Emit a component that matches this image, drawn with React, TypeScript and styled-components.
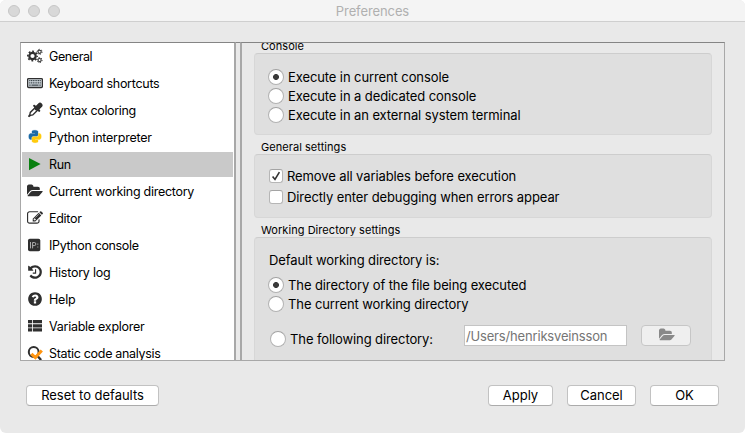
import React from 'react';
import styled, { createGlobalStyle, css } from 'styled-components';

const GlobalStyle = createGlobalStyle`
  * { box-sizing: border-box; }
  html, body { margin: 0; padding: 0; background: #fff; overflow: hidden; }
  body { font-family: Inter, "Liberation Sans", sans-serif; font-size: 13px; color: #000; }
`;

const Window = styled.div`
  width: 745px;
  height: 433px;
  display: flex;
  flex-direction: column;
  background: #e9e9e9;
  border-radius: 6px;
  overflow: hidden;
`;

const TitleBar = styled.header`
  height: 22px;
  flex: none;
  display: grid;
  grid-template-columns: 1fr auto 1fr;
  align-items: center;
  background: #f4f4f4;
  border-bottom: 1px solid #cfcfcf;
`;

const TrafficLights = styled.div`
  display: flex;
  gap: 8px;
  padding-left: 8px;
`;

const Light = styled.span`
  width: 12px;
  height: 12px;
  border-radius: 50%;
  background: #d8d8d8;
  border: 1px solid #c6c6c6;
`;

const Title = styled.span`
  color: #b0b0b0;
  line-height: 20px;
  letter-spacing: -0.1px;
`;

const Panes = styled.main`
  display: flex;
  height: 319px;
  margin: 20px 20px 0;
`;

const Splitter = styled.div`
  width: 4px;
  border-top: 1px solid #858585;
  border-bottom: 1px solid #a8a8a8;
`;

const CategoryList = styled.ul`
  width: 216px;
  margin: 0;
  padding: 1px 1px 0;
  list-style: none;
  display: flex;
  flex-direction: column;
  gap: 2px;
  background: #fff;
  border: 1px solid #a8a8a8;
  border-top-color: #858585;
  border-right: 2px solid #a8a8a8;
  overflow: hidden;
`;

const Category = styled.li<{ $active?: boolean; $spacing: number }>`
  flex: none;
  height: 25px;
  display: flex;
  align-items: center;
  gap: 6px;
  padding: 0 0 1px 5px;
  background: ${p => (p.$active ? '#c9c9c9' : 'transparent')};
  font-size: 12.5px;
  letter-spacing: ${p => p.$spacing}px;
  white-space: nowrap;
  svg { width: 16px; height: 16px; flex: none; display: block; color: #2f2f2f; }
`;

const Page = styled.section`
  flex: 1;
  min-width: 0;
  padding: 0 12px;
  border: 1px solid #a8a8a8;
  border-top-color: #858585;
  border-left: 2px solid #a8a8a8;
  overflow: hidden;
`;

const GroupTitle = styled.h2<{ $height: number }>`
  margin: 0;
  padding-left: 7px;
  height: ${p => p.$height}px;
  display: flex;
  align-items: flex-end;
  font-size: 11px;
  font-weight: 400;
  line-height: 14px;
  letter-spacing: 0.05px;
`;

const Group = styled.div<{ $height: number; $top: number }>`
  height: ${p => p.$height}px;
  padding: ${p => p.$top}px 0 0 13px;
  background: #dfdfdf;
  border: 1px solid #d7d7d7;
  border-top-color: #cdcdcd;
  border-radius: 4px;
`;

const Option = styled.label<{ $height: number; $boxed?: boolean; $drop?: number }>`
  height: ${p => p.$height}px;
  margin-top: ${p => p.$drop ?? 0}px;
  padding-left: ${p => (p.$boxed ? 1 : 0)}px;
  display: flex;
  align-items: center;
  gap: 4px;
  letter-spacing: -0.1px;
  white-space: nowrap;
  > span:last-child { margin-top: -1px; }
`;

const Radio = styled.span<{ $checked?: boolean }>`
  width: 16px;
  height: 16px;
  flex: none;
  border-radius: 50%;
  border: 1px solid #b2b2b2;
  border-top-color: #a2a2a2;
  background: ${p => (p.$checked ? 'radial-gradient(circle, #3b3b3b 2.6px, #fff 3.3px)' : '#fff')};
`;

const Check = styled.span`
  width: 14px;
  height: 14px;
  flex: none;
  border-radius: 3px;
  border: 1px solid #b6b6b6;
  border-top-color: #a4a4a4;
  background: #fff;
  svg { display: block; width: 12px; height: 12px; }
`;

const Caption = styled.p`
  margin: 0 0 5.5px 1px;
  line-height: 19px;
  letter-spacing: -0.1px;
  white-space: nowrap;
`;

const PathRow = styled.div`
  display: flex;
  align-items: flex-start;
  height: 22px;
  margin: 11.5px 0 0 2px;
`;

const PathField = styled.div`
  width: 163px;
  height: 21px;
  margin-left: auto;
  padding-left: 1px;
  border: 1px solid #c4c4c4;
  background: #fff;
  color: #757575;
  line-height: 20px;
  letter-spacing: -0.17px;
  white-space: nowrap;
`;

const buttonFace = css`
  height: 21px;
  padding: 0 0 1px;
  border-radius: 4px;
  border: 1px solid #c2c2c2;
  border-bottom-color: #ababab;
  display: flex;
  align-items: center;
  justify-content: center;
`;

const BrowseButton = styled.button`
  ${buttonFace}
  width: 50px;
  margin: 0 20px 0 14px;
  background: #efefef;
  border-color: #c6c6c6;
  svg { width: 16px; height: 16px; color: #898989; margin: -1px 0 0 1px; }
`;

const Footer = styled.footer`
  display: flex;
  align-items: center;
  gap: 14px;
  padding: 24px 26px 0;
`;

const PushButton = styled.button<{ $width: number; $pushRight?: boolean }>`
  ${buttonFace}
  width: ${p => p.$width}px;
  margin-left: ${p => (p.$pushRight ? 'auto' : '0')};
  background: #fff;
  font: inherit;
  color: #000;
  letter-spacing: -0.03px;
`;

const GearsIcon = () => (
  <svg viewBox="0 0 16 16" fill="none" stroke="currentColor">
    <circle cx="5.5" cy="8" r="3.2" strokeWidth="2.2" />
    <circle cx="5.5" cy="8" r="4.7" strokeWidth="1.6" strokeDasharray="1.85 1.84" strokeDashoffset=".9" />
    <circle cx="12.6" cy="3.8" r="1.6" strokeWidth="1.1" />
    <circle cx="12.6" cy="3.8" r="2.5" strokeWidth="1" strokeDasharray="1.3 1.318" strokeDashoffset=".2" />
    <circle cx="12.6" cy="12.1" r="1.6" strokeWidth="1.1" />
    <circle cx="12.6" cy="12.1" r="2.5" strokeWidth="1" strokeDasharray="1.3 1.318" strokeDashoffset=".2" />
  </svg>
);

const EyedropperIcon = () => (
  <svg viewBox="0 0 16 16" fill="none" stroke="currentColor">
    <path d="M8.3 5.4L3.3 10.4l-.5 2.4-1 1.3.3.3 1.3-1 2.4-.5 5-5z" strokeWidth="1.4" fill="#fff" />
    <path d="M7.2 3.8l5 5" strokeWidth="2.2" strokeLinecap="round" />
    <path d="M10 6.2l3-3" strokeWidth="5" strokeLinecap="round" />
  </svg>
);

const FolderOpenIcon = () => (
  <svg viewBox="0 0 1920 1792" fill="currentColor">
    <path d="M1879 952q0 31-31 66l-336 396q-43 51-120.5 86.5t-143.5 35.5h-1088q-34 0-60.5-13t-26.5-43q0-31 31-66l336-396q43-51 120.5-86.5t143.5-35.5h1088q34 0 60.5 13t26.5 43zm-343-344v160h-832q-94 0-197 47.5t-164 119.5l-337 396-5 6q0-4-.5-12.5t-.5-12.5v-960q0-92 66-158t158-66h320q92 0 158 66t66 158v32h544q92 0 158 66t66 158z" />
  </svg>
);

const KeyboardIcon = () => (
  <svg viewBox="0 0 16 16">
    <rect x=".6" y="3.6" width="14.8" height="8.9" rx="1" fill="#d5dde2" stroke="#2f2f2f" strokeWidth="1.3" />
    <path d="M2.2 5.6h11.6M2.2 7.8h11.6" stroke="#3c464c" strokeWidth="1.2" strokeDasharray="1.2 .55" />
    <path d="M2.2 10.1h1.5M4.4 10.1h7.2M12.3 10.1h1.5" stroke="#3c464c" strokeWidth="1.2" />
  </svg>
);

const PythonIcon = () => {
  const snake =
    'M14.25.18l.9.2.73.26.59.3.45.32.34.34.25.34.16.33.1.3.04.26.02.2-.01.13V8.5l-.05.63-.13.55-.21.46-.26.38-.3.31-.33.25-.35.19-.35.14-.33.1-.3.07-.26.04-.21.02H8.77l-.69.05-.59.14-.5.22-.41.27-.33.32-.27.35-.2.36-.15.37-.1.35-.07.32-.04.27-.02.21v3.06H3.17l-.21-.03-.28-.07-.32-.12-.35-.18-.36-.26-.36-.36-.35-.46-.32-.59-.28-.73-.21-.88-.14-1.05-.05-1.23.06-1.22.16-1.04.24-.87.32-.71.36-.57.4-.44.42-.33.42-.24.4-.16.36-.1.32-.05.24-.01h.16l.06.01h8.16v-.83H6.18l-.01-2.75-.02-.37.05-.34.11-.31.17-.28.25-.26.31-.23.38-.2.44-.18.51-.15.58-.12.64-.1.71-.06.77-.04.84-.02 1.27.05z';
  return (
    <svg viewBox="-3.5 -2.5 31 31">
      <path d={snake} fill="#1c6ba6" stroke="#1c6ba6" strokeWidth=".6" />
      <path d={snake} fill="#ffcb0d" stroke="#ffcb0d" strokeWidth=".6" transform="rotate(180 12 12)" />
    </svg>
  );
};

const PlayIcon = () => (
  <svg viewBox="0 0 16 16"><path d="M2 1.9v12.4L13.6 8.1z" fill="#0a8010" /></svg>
);

const EditIcon = () => (
  <svg viewBox="0 0 1792 1792" fill="currentColor">
    <path d="M888 1184l116-116-152-152-116 116v56h96v96h56zm440-720q-16-16-33 1l-350 350q-17 17-1 33t33-1l350-350q17-17 1-33zm80 594v190q0 119-84.5 203.5t-203.5 84.5h-832q-119 0-203.5-84.5t-84.5-203.5v-832q0-119 84.5-203.5t203.5-84.5h832q63 0 117 25 15 7 18 23 3 17-9 29l-49 49q-14 14-32 8-23-6-45-6h-832q-66 0-113 47t-47 113v832q0 66 47 113t113 47h832q66 0 113-47t47-113v-126q0-13 9-22l64-64q15-15 35-7t20 29zm-96-738l288 288-672 672h-288v-288zm444 132l-92 92-288-288 92-92q28-28 68-28t68 28l152 152q28 28 28 68t-28 68z" />
  </svg>
);

const IPythonIcon = () => (
  <svg viewBox="0 0 16 16">
    <rect x="1" y="1.8" width="12.3" height="12.4" rx="1.8" fill="#2f2f2f" />
    <path d="M3.5 5v6.4M5.6 11.4V5.5h1.7a1.4 1.4 0 0 1 0 3.1H5.6" stroke="#bbb" fill="none" strokeWidth=".9" />
    <path d="M10.3 6.6h1v1.2h-1zM10.3 9.4h1v1.2h-1z" fill="#aaa" />
  </svg>
);

const HistoryIcon = () => (
  <svg viewBox="0 0 1792 1792" fill="currentColor">
    <path d="M1664 896q0 156-61 298t-164 245-245 164-298 61q-172 0-327-72.5t-264-204.5q-7-10-6.5-22.5t8.5-20.5l137-138q10-9 25-9 16 2 23 12 73 95 179 147t225 52q104 0 198.5-40.5t163.5-109.5 109.5-163.5 40.5-198.5-40.5-198.5-109.5-163.5-163.5-109.5-198.5-40.5q-98 0-188 35.5t-160 101.5l137 138q31 30 14 69-17 40-59 40h-448q-26 0-45-19t-19-45v-448q0-42 40-59 39-17 69 14l130 129q107-101 244.5-156.5t284.5-55.5q156 0 298 61t245 164 164 245 61 298zm-640-288v448q0 14-9 23t-23 9h-320q-14 0-23-9t-9-23v-64q0-14 9-23t23-9h224v-352q0-14 9-23t23-9h64q14 0 23 9t9 23z" />
  </svg>
);

const HelpIcon = () => (
  <svg viewBox="0 0 1792 1792" fill="currentColor">
    <path d="M1024 1376v-192q0-14-9-23t-23-9h-192q-14 0-23 9t-9 23v192q0 14 9 23t23 9h192q14 0 23-9t9-23zm256-672q0-88-55.5-163t-138.5-116-170-41q-243 0-371 213-15 24 8 42l132 100q7 6 19 6 16 0 25-12 53-68 86-92 34-24 86-24 48 0 85.5 26t37.5 59q0 38-20 61t-68 45q-63 28-115.5 86.5t-52.5 125.5v36q0 14 9 23t23 9h192q14 0 23-9t9-23q0-19 21.5-49.5t54.5-49.5q32-18 49-28.5t46-35 44.5-48 28-60.5 12.5-81zm384 192q0 209-103 385.5t-279.5 279.5-385.5 103-385.5-103-279.5-279.5-103-385.5 103-385.5 279.5-279.5 385.5-103 385.5 103 279.5 279.5 103 385.5z" />
  </svg>
);

const ListIcon = () => (
  <svg viewBox="0 0 16 16" fill="currentColor">
    <path d="M1 2.1h4.2v3.2H1zM6 2.1h9v3.2H6zM1 6.2h4.2v3.2H1zM6 6.2h9v3.2H6zM1 10.3h4.2v3.2H1zM6 10.3h9v3.2H6z" />
  </svg>
);

const AnalysisIcon = () => (
  <svg viewBox="0 0 16 16" fill="none">
    <circle cx="6.7" cy="7" r="4.9" stroke="#2f2f2f" strokeWidth="2" />
    <path d="M10.5 11l3.6 4" stroke="#2f2f2f" strokeWidth="2.4" />
    <path d="M4.4 8.8l4 3.8 6.4-7" stroke="#ff9410" strokeWidth="3" />
  </svg>
);

const categories = [
  { label: 'General', icon: <GearsIcon />, spacing: -0.4 },
  { label: 'Keyboard shortcuts', icon: <KeyboardIcon />, spacing: -0.28 },
  { label: 'Syntax coloring', icon: <EyedropperIcon />, spacing: -0.35 },
  { label: 'Python interpreter', icon: <PythonIcon />, spacing: -0.24 },
  { label: 'Run', icon: <PlayIcon />, spacing: -0.35, active: true },
  { label: 'Current working directory', icon: <FolderOpenIcon />, spacing: -0.28 },
  { label: 'Editor', icon: <EditIcon />, spacing: -0.3 },
  { label: 'IPython console', icon: <IPythonIcon />, spacing: -0.35 },
  { label: 'History log', icon: <HistoryIcon />, spacing: -0.24 },
  { label: 'Help', icon: <HelpIcon />, spacing: -0.17 },
  { label: 'Variable explorer', icon: <ListIcon />, spacing: -0.26 },
  { label: 'Static code analysis', icon: <AnalysisIcon />, spacing: -0.31 },
];

export default function App() {
  return (
    <>
      <GlobalStyle />
      <Window>
        <TitleBar>
          <TrafficLights><Light /><Light /><Light /></TrafficLights>
          <Title>Preferences</Title>
        </TitleBar>
        <Panes>
          <CategoryList>
            {categories.map(c => (
              <Category key={c.label} $active={c.active} $spacing={c.spacing}>
                {c.icon}
                <span>{c.label}</span>
              </Category>
            ))}
          </CategoryList>
          <Splitter />
          <Page>
            <GroupTitle $height={10}>Console</GroupTitle>
            <Group $height={82} $top={13.5}>
              <Option $height={19}><Radio $checked /><span>Execute in current console</span></Option>
              <Option $height={19}><Radio /><span>Execute in a dedicated console</span></Option>
              <Option $height={19}><Radio /><span>Execute in an external system terminal</span></Option>
            </Group>
            <GroupTitle $height={19}>General settings</GroupTitle>
            <Group $height={64} $top={10.5}>
              <Option $height={21} $boxed>
                <Check>
                  <svg viewBox="0 0 12 12"><path d="M2.6 6.4l2.4 3L9.4 2.2" fill="none" stroke="#333" strokeWidth="1.6" /></svg>
                </Check>
                <span>Remove all variables before execution</span>
              </Option>
              <Option $height={21} $boxed><Check /><span>Directly enter debugging when errors appear</span></Option>
            </Group>
            <GroupTitle $height={19}>Working Directory settings</GroupTitle>
            <Group $height={150} $top={13}>
              <Caption>Default working directory is:</Caption>
              <Option $height={19}><Radio $checked /><span>The directory of the file being executed</span></Option>
              <Option $height={19}><Radio /><span>The current working directory</span></Option>
              <PathRow>
                <Option $height={19} $drop={4.5}><Radio /><span>The following directory:</span></Option>
                <PathField>/Users/henriksveinsson</PathField>
                <BrowseButton><FolderOpenIcon /></BrowseButton>
              </PathRow>
            </Group>
          </Page>
        </Panes>
        <Footer>
          <PushButton $width={133}>Reset to defaults</PushButton>
          <PushButton $width={65} $pushRight>Apply</PushButton>
          <PushButton $width={69}>Cancel</PushButton>
          <PushButton $width={69}>OK</PushButton>
        </Footer>
      </Window>
    </>
  );
}
